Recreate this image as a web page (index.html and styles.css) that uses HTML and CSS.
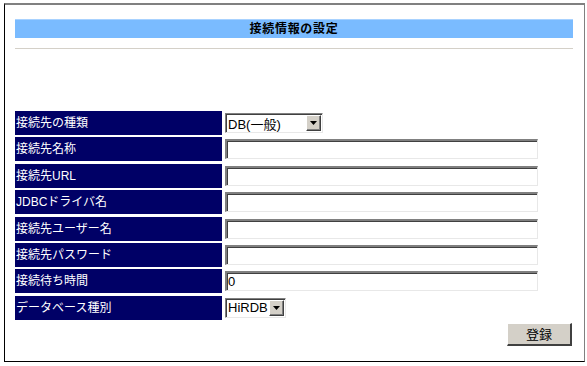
FILE: index.html
```html
<!DOCTYPE html>
<html lang="ja">
<head>
<meta charset="utf-8">
<title>接続情報の設定</title>
<link rel="stylesheet" href="styles.css">
</head>
<body>
<div class="frame">
  <div class="title">接続情報の設定</div>
  <div class="sep"></div>
  <form class="form">
    <div class="label">接続先の種類</div>
    <div class="field">
      <div class="select sel-type">
        <span class="sel-text">DB(一般)</span>
        <span class="arrow"><svg width="7" height="4" viewBox="0 0 7 4"><path d="M0 0H7L3.5 4Z" fill="#000"/></svg></span>
      </div>
    </div>
    <div class="label">接続先名称</div>
    <div class="field"><input class="text" type="text"></div>
    <div class="label">接続先URL</div>
    <div class="field"><input class="text" type="text"></div>
    <div class="label">JDBCドライバ名</div>
    <div class="field"><input class="text" type="text"></div>
    <div class="label">接続先ユーザー名</div>
    <div class="field"><input class="text" type="text"></div>
    <div class="label">接続先パスワード</div>
    <div class="field"><input class="text" type="password"></div>
    <div class="label">接続待ち時間</div>
    <div class="field"><input class="text" type="text" value="0"></div>
    <div class="label">データベース種別</div>
    <div class="field">
      <div class="select sel-db">
        <span class="sel-text">HiRDB</span>
        <span class="arrow"><svg width="7" height="4" viewBox="0 0 7 4"><path d="M0 0H7L3.5 4Z" fill="#000"/></svg></span>
      </div>
    </div>
  </form>
  <div class="actions"><button class="btn" type="button">登録</button></div>
</div>
</body>
</html>
```
FILE: styles.css
```css
html, body {
  margin: 0;
  padding: 0;
  background: #fff;
}
body {
  font-family: "Liberation Sans", "Noto Sans CJK JP", sans-serif;
  font-size: 12px;
  color: #000;
}
.frame {
  margin: 3px 0 0 4px;
  width: 581px;
  height: 359px;
  box-sizing: border-box;
  border-top: 2px solid #808080;
  border-right: 1px solid #808080;
  border-left: 1px solid #000;
  border-bottom: 1px solid #000;
  padding: 14px 10px 0 10px;
}
.title {
  height: 19px;
  width: 558px;
  background: #7abbff;
  border-top: 1px solid #a8d2ff;
  box-sizing: border-box;
  text-align: center;
  font-weight: bold;
  font-size: 12px;
  letter-spacing: 0.7px;
  line-height: 18px;
}
.sep {
  margin-top: 10px;
  width: 558px;
  height: 1px;
  background: #d4d0c8;
}
.form {
  margin: 62px 0 0 0;
  display: grid;
  grid-template-columns: 207px 320px;
  grid-auto-rows: 24px;
  column-gap: 3px;
  row-gap: 2.4px;
}
.label {
  background: #000066;
  color: #fff;
  font-size: 12px;
  line-height: 24px;
  padding-left: 1px;
  white-space: nowrap;
  overflow: hidden;
}
.field {
  display: flex;
  align-items: center;
}
.text {
  width: 313px;
  height: 20px;
  box-sizing: border-box;
  margin: 0;
  padding: 0 1px;
  border-top: 2px solid #808080;
  border-left: 2px solid #808080;
  border-right: 1px solid #e8e8e8;
  border-bottom: 1px solid #e8e8e8;
  box-shadow: inset 1px 1px 0 #404040;
  font-family: "Liberation Sans", "Noto Sans CJK JP", sans-serif;
  font-size: 13px;
  background: #fff;
  outline: none;
}
.select {
  position: relative;
  height: 20px;
  box-sizing: border-box;
  border-top: 1px solid #808080;
  border-left: 1px solid #808080;
  border-right: 1px solid #e8e8e8;
  border-bottom: 1px solid #e8e8e8;
  box-shadow: inset 1px 1px 0 #404040;
  background: #fff;
  display: flex;
  align-items: center;
  padding-left: 2px;
  font-size: 13px;
}
.sel-type { width: 98px; }
.sel-db { width: 61px; }
.sel-text {
  white-space: nowrap;
}
.arrow {
  position: absolute;
  right: 1px;
  top: 1px;
  bottom: 1px;
  width: 15px;
  box-sizing: border-box;
  background: #d4d0c8;
  border-top: 1px solid #fff;
  border-left: 1px solid #fff;
  border-right: 1px solid #404040;
  border-bottom: 1px solid #404040;
  box-shadow: inset -1px -1px 0 #808080;
  display: flex;
  align-items: center;
  justify-content: center;
}
.actions {
  width: 558px;
  display: flex;
  justify-content: flex-end;
  margin-top: 3px;
}
.btn {
  width: 65px;
  height: 23px;
  margin: 0 1px 0 0;
  padding: 0;
  background: #d4d0c8;
  border-top: 1px solid #fff;
  border-left: 1px solid #fff;
  border-right: 2px solid #404040;
  border-bottom: 2px solid #404040;
  font-family: "Noto Sans CJK JP", sans-serif;
  font-size: 13px;
  font-weight: normal;
  color: #000;
}
```
